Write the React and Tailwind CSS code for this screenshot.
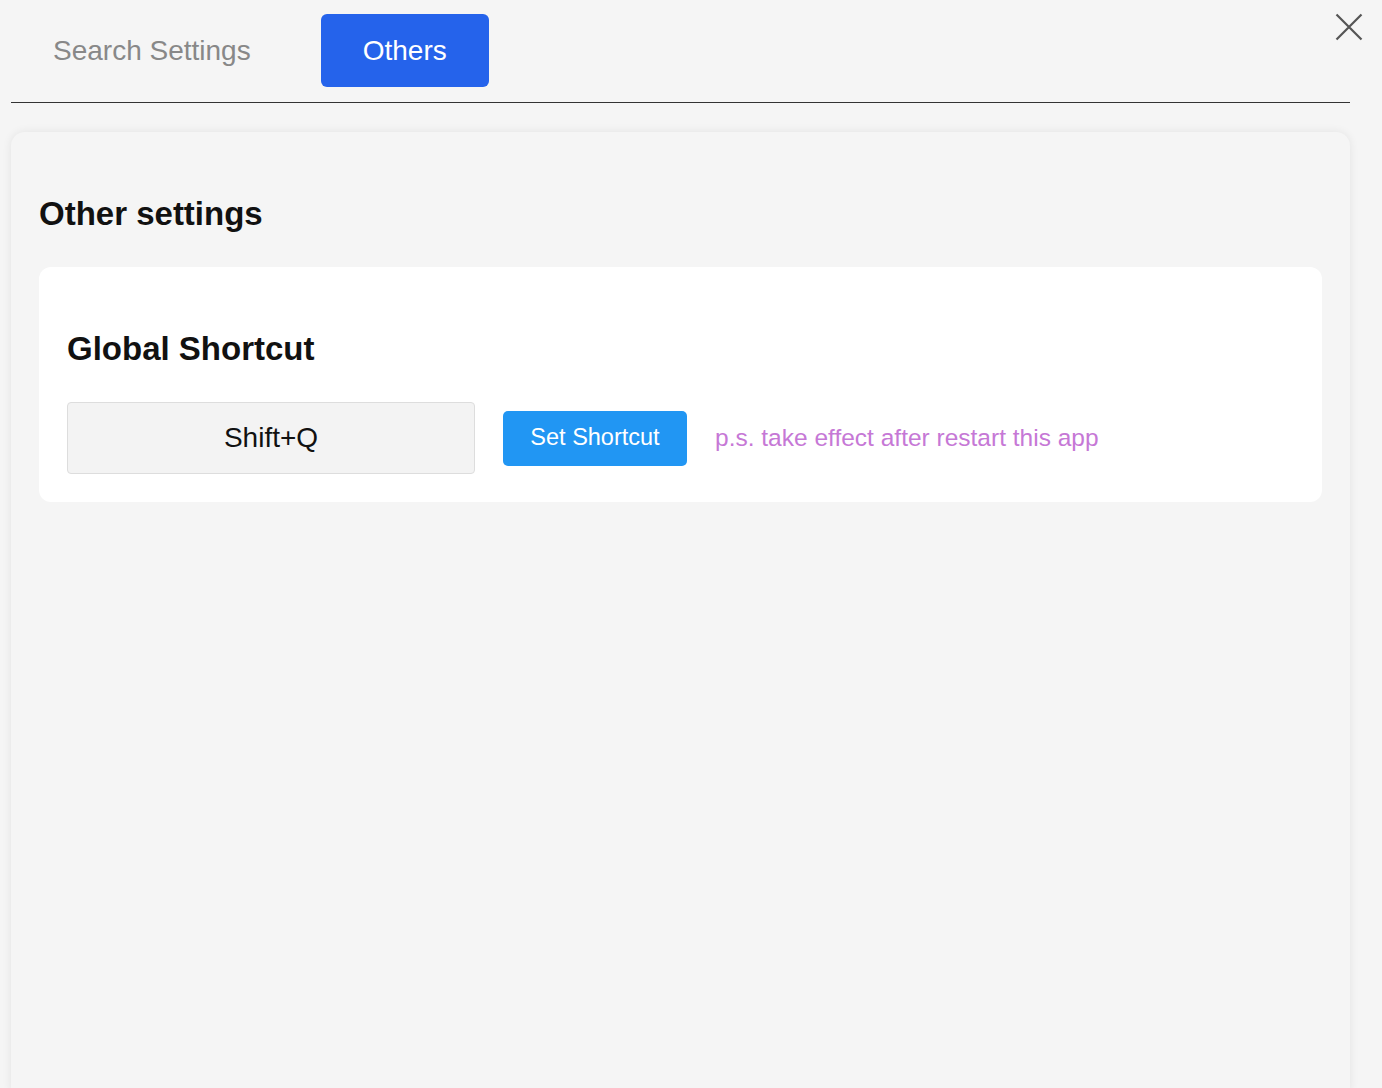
import React from "react";

export default function App() {
  return (
    <div
      className="min-h-[1088px] bg-[#f5f5f5] relative"
      style={{ fontFamily: '"Liberation Sans", Arial, sans-serif' }}
    >
      <button className="absolute left-[1335px] top-[13px] w-[28px] h-[28px] flex items-center justify-center text-[#555]">
        <svg width="28" height="28" viewBox="0 0 28 28" fill="none" stroke="currentColor" strokeWidth="2.2">
          <path d="M1.5 1.5 L26.5 26.5 M26.5 1.5 L1.5 26.5" />
        </svg>
      </button>
      <div className="ml-[11px] w-[1339px]">
        <div className="pt-[14px] pb-[15px] border-b border-[#333] flex gap-[28px]">
          <div className="h-[73px] px-[42px] flex items-center text-[28px] text-[#888] rounded-[6px]">
            Search Settings
          </div>
          <div className="h-[73px] px-[42px] flex items-center text-[28px] text-white bg-[#2563eb] rounded-[6px]">
            Others
          </div>
        </div>
        <div className="mt-[29px] bg-[#f5f5f5] rounded-t-[14px] shadow-[0_0_10px_rgba(0,0,0,0.08)] px-[28px] pt-[28px] min-h-[960px]">
          <h2 className="h-[107px] flex items-center text-[33px] font-bold text-[#111] leading-[38px]">
            Other settings
          </h2>
          <div className="bg-white rounded-[12px] p-[28px]">
            <h3 className="h-[107px] flex items-center text-[33px] font-bold text-[#111] leading-[38px]">
              Global Shortcut
            </h3>
            <div className="flex items-center gap-[28px]">
              <div className="w-[408px] h-[72px] bg-[#f3f3f3] border border-[#dddddd] rounded-[4px] flex items-center justify-center text-[28px] text-[#111]">
                Shift+Q
              </div>
              <button className="h-[55px] w-[184px] justify-center bg-[#2196f3] text-white text-[23.5px] rounded-[5px] flex items-center">
                Set Shortcut
              </button>
              <span className="text-[24.5px] text-[#c678d6]">
                p.s. take effect after restart this app
              </span>
            </div>
          </div>
        </div>
      </div>
    </div>
  );
}
